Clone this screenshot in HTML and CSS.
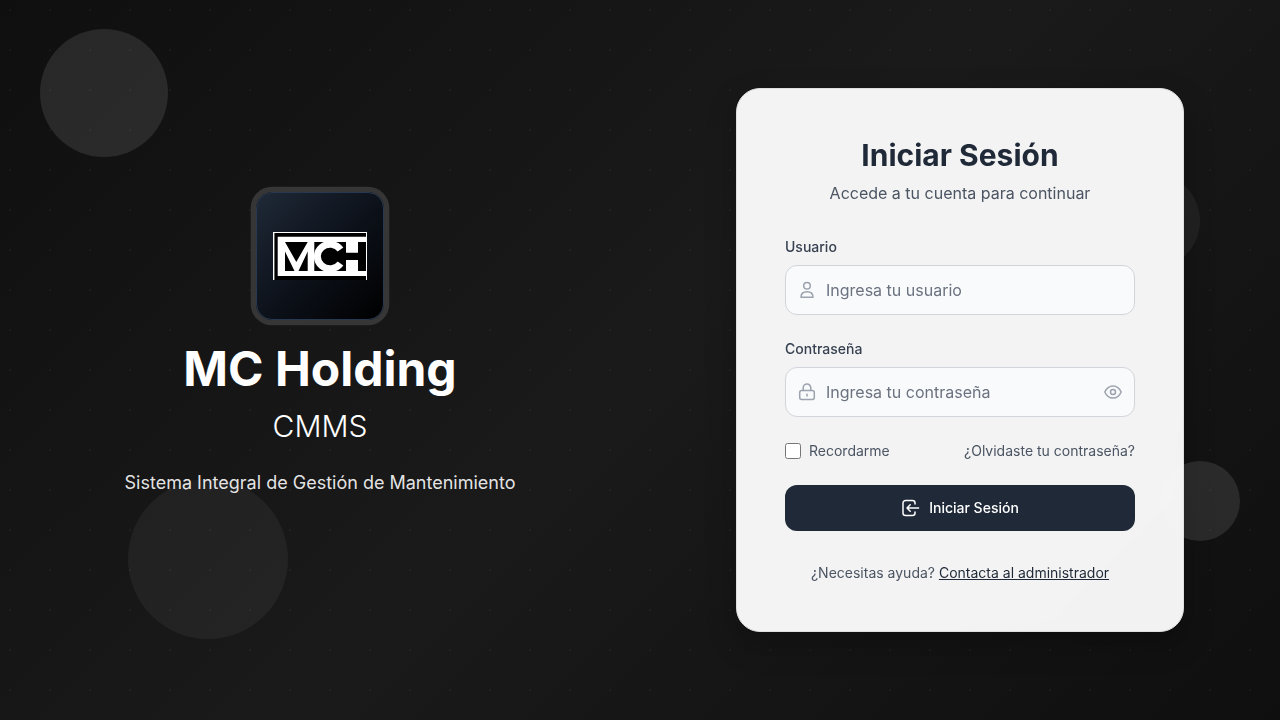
FILE: index.html
```
<!DOCTYPE html>
<html lang="es">
<head>
<meta charset="utf-8">
<title>MC Holding CMMS</title>
<link rel="stylesheet" href="styles.css">
</head>
<body>
<div class="page">
  <div class="circle circle-a"></div>
  <div class="circle circle-b"></div>
  <section class="brand">
    <div class="logo">
      <svg width="94" height="48" viewBox="0 0 94 48">
        <path fill="#000" d="M0 0h94v48H0z"/>
        <path fill="#fff" d="M0 0h94v1H0zM0 0h1.400v48H0zM93 0h1v48h-1z"/>
        <path fill="#fff" d="M4.700 4.800H94V44H4.700z"/>
        <path fill="#000" d="M12 10h22.700L23.300 30zM12 19.500 21.500 39H12zM34.700 19.500V39h-9.200zM41.300 10H93v29H41.300z"/>
        <path fill="none" stroke="#fff" stroke-width="7" d="M67.500 17.500A12.700 12.200 0 1 0 67.500 31.500"/>
        <path fill="#fff" d="M73 9.800h12v10.900H73zM73 28h12v11.200H73z"/>
      </svg>
    </div>
    <h1>MC Holding</h1>
    <p class="product">CMMS</p>
    <p class="tagline">Sistema Integral de Gestión de Mantenimiento</p>
  </section>
  <section class="access">
    <form class="card">
      <h2>Iniciar Sesión</h2>
      <p class="subtitle">Accede a tu cuenta para continuar</p>
      <label class="label" for="user">Usuario</label>
      <div class="field">
        <svg class="icon" viewBox="0 0 20 20"><circle cx="10" cy="5.700" r="3.300"/><path d="M4 17.300c0-3.500 2.300-5.600 6-5.600s6 2.100 6 5.600z"/></svg>
        <input id="user" type="text" placeholder="Ingresa tu usuario">
      </div>
      <label class="label" for="pass">Contraseña</label>
      <div class="field">
        <svg class="icon" viewBox="0 0 20 20"><rect x="2.700" y="8.500" width="14.600" height="8.900" rx="2"/><path d="M6.200 8.500V5.800a3.800 3.800 0 0 1 7.600 0v2.700M10 12.200v1.700"/></svg>
        <input id="pass" type="password" placeholder="Ingresa tu contraseña">
        <svg class="icon" viewBox="0 0 20 20"><path d="M1.800 10C3.600 5.900 6.400 3.900 10 3.900s6.400 2 8.200 6.100c-1.800 4.100-4.600 6.100-8.200 6.100S3.600 14.100 1.800 10z"/><circle cx="10" cy="10" r="2.500"/></svg>
      </div>
      <div class="options">
        <label class="remember"><input type="checkbox">Recordarme</label>
        <a>¿Olvidaste tu contraseña?</a>
      </div>
      <button type="button" class="submit">
        <svg class="icon" viewBox="0 0 20 20"><path d="M14 6V5a2.500 2.500 0 0 0-2.500-2.500H4.500A2.500 2.500 0 0 0 2 5v10a2.500 2.500 0 0 0 2.500 2.500h7A2.500 2.500 0 0 0 14 15v-1M17.600 10H6.200M9.200 6.800 6 10l3.200 3.200"/></svg>
        Iniciar Sesión
      </button>
      <p class="help">¿Necesitas ayuda? <a>Contacta al administrador</a></p>
    </form>
  </section>
  <div class="circle circle-c"></div>
  <div class="circle circle-d"></div>
</div>
</body>
</html>
```
FILE: styles.css
```
* { box-sizing: border-box; }
body, h1, h2, p { margin: 0; }
body { font-family: Inter, "Liberation Sans", sans-serif; overflow: hidden; }
.page {
  position: relative;
  display: grid;
  grid-template-columns: 1fr 1fr;
  height: 720px;
  overflow: hidden;
  background:
    radial-gradient(circle at 10px 10px, rgba(255,255,255,.035) 1px, transparent 1px) 0 0 / 40px 40px,
    linear-gradient(135deg, #0f0f0f 0%, #1a1a1a 50%, #0f0f0f 100%);
}
.circle { position: absolute; border-radius: 50%; background: rgba(255,255,255,.1); pointer-events: none; }
.circle-a { left: 40px; top: 29px; width: 128px; height: 128px; }
.circle-b { left: 128px; top: 479px; width: 160px; height: 160px; background: rgba(255,255,255,.05); }
.circle-c { left: 1104px; top: 173px; width: 96px; height: 96px; background: rgba(255,255,255,.05); }
.circle-d { left: 1160px; top: 461px; width: 80px; height: 80px; }
.brand {
  position: relative;
  display: flex;
  flex-direction: column;
  align-items: center;
  padding-top: 192px;
  color: #fff;
}
.logo {
  display: flex;
  align-items: center;
  justify-content: center;
  width: 128px;
  height: 128px;
  border: 1px solid #283850;
  border-radius: 16px;
  background: linear-gradient(135deg, #1f2937, #0d121b 50%, #000);
  box-shadow: 0 0 0 5.300px #363636;
}
h1 { margin-top: 25px; font-size: 48px; line-height: 48px; font-weight: 700; }
.product { margin-top: 15px; font-size: 30px; line-height: 36px; font-weight: 300; }
.tagline { margin-top: 25px; font-size: 18px; line-height: 28px; color: rgba(255,255,255,.9); }
.access { position: relative; display: flex; align-items: center; justify-content: center; }
.card {
  width: 448px;
  height: 544px;
  padding: 48px;
  border: 1px solid #dedfe0;
  border-radius: 24px;
  background: rgba(255,255,255,.95);
  backdrop-filter: blur(4px);
  box-shadow: 0 12px 30px rgba(0,0,0,.25);
  color: #4b5563;
  font-size: 14px;
  line-height: 20px;
}
h2 { text-align: center; color: #1f2937; font-size: 30px; line-height: 36px; font-weight: 700; }
.subtitle { margin-top: 8px; text-align: center; font-size: 16px; line-height: 24px; }
.label { display: block; margin-top: 32px; font-weight: 500; color: #374151; }
.field {
  display: flex;
  align-items: center;
  height: 50px;
  margin-top: 8px;
  padding: 0 11px;
  border: 1px solid #d1d5db;
  border-radius: 12px;
  background: #f9fafb;
}
.field + .label { margin-top: 24px; }
.icon { flex: none; width: 20px; height: 20px; fill: none; stroke: #9ca3af; stroke-width: 1.5; stroke-linecap: round; stroke-linejoin: round; }
.field input { flex: 1; min-width: 0; margin-left: 9px; padding: 0; border: 0; outline: 0; background: none; font: 16px/24px Inter, sans-serif; }
.field input::placeholder { color: #6b7280; opacity: 1; }
.options { display: flex; justify-content: space-between; margin-top: 24px; }
.remember { display: flex; align-items: center; gap: 8px; }
.remember input { width: 16px; height: 16px; margin: 0; }
.submit {
  display: flex;
  align-items: center;
  justify-content: center;
  gap: 8px;
  width: 350px;
  height: 46px;
  margin-top: 24px;
  border: 0;
  border-radius: 12px;
  background: #1f2937;
  color: #fff;
  font: 500 14px/20px Inter, sans-serif;
}
.submit .icon { stroke: #fff; }
.help { margin-top: 32px; text-align: center; }
.help a { color: #1f2937; text-decoration: underline; }
```
